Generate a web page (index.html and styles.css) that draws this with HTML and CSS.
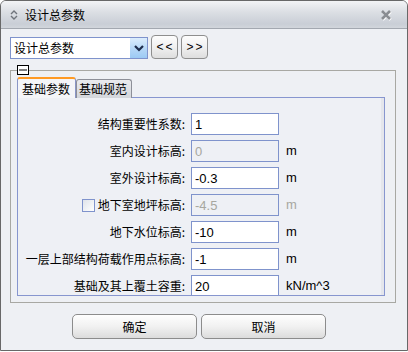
FILE: index.html
```html
<!DOCTYPE html>
<html lang="zh-CN">
<head>
    <meta charset="UTF-8" />
    <title>设计总参数</title>
    <link rel="stylesheet" href="styles.css">
</head>
<body>
    <div class="window">
        <div class="titlebar">
            <svg class="title-icon" width="8" height="10" viewBox="0 0 8 10">
                <path d="M1 4 L4 1 L7 4 M1 6 L4 9 L7 6" fill="none" stroke="#6f747c" stroke-width="1.4"/>
            </svg>
            <span class="title">设计总参数</span>
            <svg class="close" width="12" height="12" viewBox="0 0 12 12">
                <path d="M2 2 L10 10 M10 2 L2 10" stroke="#fff" stroke-width="3" transform="translate(0.6 0.8)"/>
                <path d="M2 2 L10 10 M10 2 L2 10" stroke="#8a8d92" stroke-width="2.6"/>
            </svg>
        </div>
        <div class="content">
            <div class="toolbar">
                <div class="combo">
                    <span class="combo-text">设计总参数</span>
                    <span class="combo-drop">
                        <svg width="10" height="7" viewBox="0 0 10 7">
                            <path d="M1 1 L5 5 L9 1" fill="none" stroke="#1d2c4c" stroke-width="2.2"/>
                        </svg>
                    </span>
                </div>
                <button class="nav">&lt;&lt;</button>
                <button class="nav">&gt;&gt;</button>
            </div>
            <fieldset class="group">
                <legend>
                    <svg width="12" height="10" viewBox="0 0 12 10">
                        <rect x="0.5" y="0.5" width="11" height="9" fill="#fff" stroke="#000"/>
                        <path d="M2 5 H10" stroke="#000"/>
                    </svg>
                </legend>
                <div class="tabs">
                    <div class="tab active">基础参数</div>
                    <div class="tab">基础规范</div>
                </div>
                <div class="panel">
                    <div class="form">
                        <label class="lbl">结构重要性系数:</label>
                        <input class="field" type="text" value="1">
                        <span class="unit"></span>

                        <label class="lbl">室内设计标高:</label>
                        <input class="field" type="text" value="0" disabled>
                        <span class="unit">m</span>

                        <label class="lbl">室外设计标高:</label>
                        <input class="field" type="text" value="-0.3">
                        <span class="unit">m</span>

                        <label class="lbl"><span class="check"></span>地下室地坪标高:</label>
                        <input class="field" type="text" value="-4.5" disabled>
                        <span class="unit off">m</span>

                        <label class="lbl">地下水位标高:</label>
                        <input class="field" type="text" value="-10">
                        <span class="unit">m</span>

                        <label class="lbl">一层上部结构荷载作用点标高:</label>
                        <input class="field" type="text" value="-1">
                        <span class="unit">m</span>

                        <label class="lbl">基础及其上覆土容重:</label>
                        <input class="field" type="text" value="20">
                        <span class="unit">kN/m^3</span>
                    </div>
                </div>
            </fieldset>
            <div class="actions">
                <button class="btn">确定</button>
                <button class="btn">取消</button>
            </div>
        </div>
    </div>
</body>
</html>
```

FILE: styles.css
```css
body {
    margin: 0;
    font-family: "Noto Sans CJK SC", sans-serif;
    font-size: 12px;
    color: #000;
}

.window {
    width: 408px;
    height: 351px;
    box-sizing: border-box;
    border: 1px solid #686868;
    border-radius: 6px 6px 0 0;
    background: #eef0f4;
    overflow: hidden;
}

.titlebar {
    height: 27px;
    display: flex;
    align-items: center;
    padding: 0 15px 0 9px;
    background: linear-gradient(#f3f4f6, #dcdfe4 40%, #c9ced6 85%, #d2d6dc);
    border-bottom: 1px solid #a3a8b0;
}

.title {
    margin-left: 7px;
    line-height: 14px;
}

.close {
    margin-left: auto;
}

.content {
    padding: 6px 11px 0 9px;
}

.toolbar {
    display: flex;
    align-items: flex-end;
    gap: 3px;
}

.combo {
    width: 138px;
    height: 22px;
    box-sizing: border-box;
    border: 1px solid #7f93cc;
    background: #fff;
    display: flex;
    align-items: center;
}

.combo-text {
    flex: 1;
    padding-left: 3px;
    line-height: 14px;
}

.combo-drop {
    width: 17px;
    height: 20px;
    display: flex;
    align-items: center;
    justify-content: center;
    background: linear-gradient(#dcedfd, #b5d7f7 55%, #9ccaf4);
}

.nav {
    width: 27px;
    height: 24px;
    padding: 0;
    border: 1px solid #8e8e8e;
    border-radius: 4px;
    background: linear-gradient(#fdfdfd, #f0f0f0 50%, #dedede);
    font-family: "Liberation Sans", sans-serif;
    font-size: 12px;
    letter-spacing: 2px;
    text-indent: 2px;
    color: #000;
}

.group {
    margin: 6px 0 0;
    padding: 2px 10px 6px 6px;
    border: 1px solid #a8a8a3;
    min-width: 0;
}

.group legend {
    padding: 0;
    line-height: 0;
}

.tabs {
    display: flex;
    align-items: flex-end;
    height: 21px;
    position: relative;
    z-index: 1;
    margin-bottom: -1px;
}

.tab {
    height: 18px;
    padding: 0 4px 0 2px;
    line-height: 18px;
    border: 1px solid #8d8f98;
    border-bottom: none;
    border-radius: 3px 3px 0 0;
    background: linear-gradient(#eaebee, #d3d6db);
}

.tab.active {
    height: 19px;
    padding: 0 5px 0 4px;
    line-height: 20px;
    border-color: #8a96c6;
    border-top: 2px solid #ff9a24;
    background: #f4f5f8;
}

.panel {
    height: 199px;
    box-sizing: border-box;
    border: 1px solid #8796cf;
    box-shadow: inset -3px 0 0 #e4e6ec;
    background: #eef0f5;
    padding-top: 15px;
    overflow: hidden;
}

.form {
    display: grid;
    grid-template-columns: 167px 88px 1fr;
    column-gap: 6px;
    row-gap: 5px;
}

.lbl {
    height: 22px;
    display: flex;
    align-items: center;
    justify-content: flex-end;
    line-height: 14px;
}

.check {
    width: 11px;
    height: 11px;
    border: 1px solid #7f93cc;
    background: linear-gradient(135deg, #dfe3ea, #fff);
    margin-right: 3px;
}

.field {
    width: 88px;
    height: 22px;
    box-sizing: border-box;
    margin: 0;
    padding: 0 3px;
    border: 1px solid #7f93cc;
    background: #fff;
    font-family: "Liberation Sans", sans-serif;
    font-size: 13px;
    color: #000;
}

.field:disabled {
    background: #eef0f5;
    color: #a7a7a0;
}

.unit {
    padding-left: 1px;
    height: 22px;
    line-height: 22px;
    font-family: "Liberation Sans", sans-serif;
    font-size: 13px;
}

.unit.off {
    color: #a7a7a0;
}

.actions {
    display: flex;
    gap: 4px;
    margin: 11px 0 0 62px;
}

.btn {
    width: 125px;
    height: 25px;
    padding: 0;
    border: 1px solid #8c8c8c;
    border-radius: 5px;
    background: linear-gradient(#fefefe, #f1f1f1 50%, #dcdcdc);
    font-family: "Noto Sans CJK SC", sans-serif;
    font-size: 12px;
    color: #000;
}
```
